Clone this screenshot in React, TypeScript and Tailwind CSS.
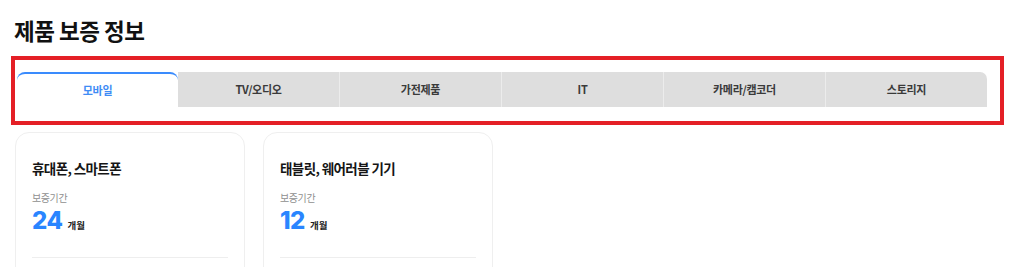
import React, { useState } from 'react';

interface Warranty {
  name: string;
  months: number;
}

const tabs = ['모바일', 'TV/오디오', '가전제품', 'IT', '카메라/캠코더', '스토리지'];

const items: Warranty[] = [
  { name: '휴대폰, 스마트폰', months: 24 },
  { name: '태블릿, 웨어러블 기기', months: 12 },
];

const kr = "font-['Noto_Sans_CJK_KR','Noto_Sans',sans-serif]";

export default function App() {
  const [active, setActive] = useState(0);

  return (
    <div className={`w-[1024px] h-[267px] overflow-hidden bg-white ${kr}`}>
      {/* 제목 */}
      <h2 className="pl-[14px] pt-[15px] text-[22.5px] leading-[30px] font-bold tracking-[-0.5px] text-[#111]">
        제품 보증 정보
      </h2>

      {/* 탭 영역 (빨간 박스) */}
      <div className="ml-[11px] mt-[11px] w-[993px] border-4 border-[#e41f26] pt-[12px] pb-[14px] pl-[2px]">
        <div className="flex w-[970px] h-[35px]">
          {tabs.map((t, i) => {
            const on = i === active;
            const last = i === tabs.length - 1;
            return (
              <button
                key={t}
                onClick={() => setActive(i)}
                className={`flex-1 flex items-center justify-center text-[11px] font-bold tracking-[-0.3px] ${
                  on
                    ? 'bg-white text-[#3f8cf5] border-t-2 border-[#3a8bfd] rounded-t-[8px]'
                    : `bg-[#dedede] text-[#3a3a3a] ${i > active + 1 ? 'border-l border-[#ececec]' : ''} ${last ? 'rounded-tr-[7px]' : ''}`
                }`}
              >
                {t}
              </button>
            );
          })}
        </div>
      </div>

      {/* 카드 목록 */}
      <div className="flex gap-[18px] pl-[15px] mt-[7px]">
        {items.map((it) => (
          <div
            key={it.name}
            className="w-[230px] h-[160px] border border-[#efefef] rounded-[14px] px-[16px] pt-[26px]"
          >
            <div className="text-[13.5px] leading-[18px] font-bold tracking-[-0.6px] text-[#151515]">
              {it.name}
            </div>
            <div className="mt-[14px] text-[10px] leading-[14px] tracking-[-0.4px] text-[#8f8f8f]">
              보증기간
            </div>
            <div className="mt-[4px] flex items-baseline gap-[5px]">
              <span className="font-['Inter',sans-serif] text-[24px] leading-[24px] font-extrabold text-[#2a85ff] tracking-[-0.5px]">
                {it.months}
              </span>
              <span className="text-[9.5px] leading-[12px] font-bold text-[#222]">개월</span>
            </div>
            <div className="mt-[24px] border-t border-[#eeeeee]" />
          </div>
        ))}
      </div>
    </div>
  );
}
